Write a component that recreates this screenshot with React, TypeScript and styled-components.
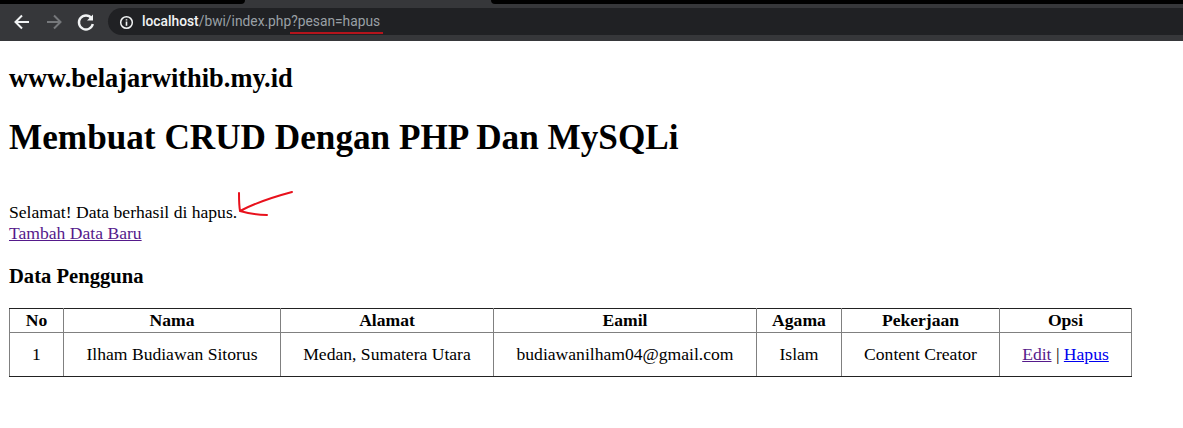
import React from "react";
import styled, { createGlobalStyle } from "styled-components";

const Global = createGlobalStyle`
  html, body { margin: 0; padding: 0; background: #fff; }
  body { font-family: "Liberation Serif", "Times New Roman", serif; font-size: 17.6px; color: #000; width: 1183px; height: 428px; overflow: hidden; }
`;

const Chrome = styled.header`
  height: 41px;
  background: #36373a;
  position: relative;
  display: flex;
  align-items: flex-start;
  padding: 8px 0 0 12px;
  box-sizing: border-box;
`;
const TabEdge = styled.div<{ $side: "left" | "right" }>`
  position: absolute;
  top: 0;
  height: 4px;
  background: #000;
  ${(p) =>
    p.$side === "left"
      ? "left: 0; width: 245px; border-bottom-right-radius: 4px;"
      : "left: 491px; right: 0; border-bottom-left-radius: 4px;"}
`;
const NavIcons = styled.div`
  display: flex;
  align-items: center;
  gap: 12px;
  width: 96px;
  height: 28px;
`;
const Omnibox = styled.div`
  flex: 1;
  height: 27px;
  padding-top: 1px;
  box-sizing: border-box;
  background: #202124;
  border-radius: 14px 0 0 14px;
  display: flex;
  align-items: center;
  padding-left: 11px;
  font: 13.8px/1 "Roboto", "Liberation Sans", sans-serif;
  color: #9aa0a6;
  gap: 8px;
  position: relative;
`;
const Host = styled.span`
  color: #f1f3f4;
  font-weight: 500;
`;
const Underline = styled.div`
  position: absolute;
  left: 182px;
  top: 24px;
  width: 93px;
  height: 2px;
  background: #b5141c;
`;
const Page = styled.main`
  padding: 0 9px;
`;
const Site = styled.h2`
  margin: 24px 0 0;
  font-size: 26.4px;
  line-height: 27px;
  font-weight: bold;
`;
const Title = styled.h1`
  margin: 25px 0 0;
  font-size: 35.2px;
  line-height: 41px;
  font-weight: bold;
`;
const Message = styled.div`
  margin-top: 44px;
  line-height: 21px;
  position: relative;
`;
const Arrow = styled.svg`
  position: absolute;
  left: 228px;
  top: -13px;
`;
const VisitedLink = styled.a`
  color: #551a8b;
  text-decoration: underline;
`;
const FreshLink = styled.a`
  color: #0000ee;
  text-decoration: underline;
`;
const Section = styled.h3`
  margin: 20px 0 0;
  font-size: 20.6px;
  line-height: 24px;
  font-weight: bold;
`;
const Table = styled.table`
  margin-top: 20px;
  border-collapse: collapse;
  table-layout: fixed;
  width: 1122px;
  border: 1px solid #222;
  font-size: 17.6px;
  text-align: center;
`;
const Th = styled.th`
  border: 1px solid #808080;
  border-top-color: #222;
  height: 23px;
  padding: 0;
  font-weight: bold;
`;
const Td = styled.td`
  border: 1px solid #808080;
  border-bottom-color: #222;
  height: 43px;
  padding: 0;
`;

const cols = [54, 217, 213, 263, 85, 158, 132];
const heads = ["No", "Nama", "Alamat", "Eamil", "Agama", "Pekerjaan", "Opsi"];
const row = ["1", "Ilham Budiawan Sitorus", "Medan, Sumatera Utara", "budiawanilham04@gmail.com", "Islam", "Content Creator"];

export default function App() {
  return (
    <>
      <Global />
      <Chrome>
        <TabEdge $side="left" />
        <TabEdge $side="right" />
        <NavIcons>
          <svg width="20" height="20" viewBox="0 0 20 20" fill="none" stroke="#f1f3f4" strokeWidth="2">
            <path d="M17 10H4M10 3.5 3.5 10l6.5 6.5" />
          </svg>
          <svg width="20" height="20" viewBox="0 0 20 20" fill="none" stroke="#76787b" strokeWidth="2">
            <path d="M3 10h13M10 3.5l6.5 6.5-6.5 6.5" />
          </svg>
          <svg width="20" height="20" viewBox="0 0 20 20" fill="none">
            <path d="M15.5 6.2A7 7 0 1 0 16.8 12" stroke="#f1f3f4" strokeWidth="2.4" />
            <path d="M17 2.5v6h-6z" fill="#f1f3f4" />
          </svg>
        </NavIcons>
        <Omnibox>
          <svg width="15" height="15" viewBox="0 0 16 16" fill="none">
            <circle cx="8" cy="8" r="6.2" stroke="#f1f3f4" strokeWidth="1.6" />
            <path d="M8 7v4.4M8 4.4v1.5" stroke="#f1f3f4" strokeWidth="1.7" />
          </svg>
          <span><Host>localhost</Host>/bwi/index.php?pesan=hapus</span>
          <Underline />
        </Omnibox>
      </Chrome>
      <Page>
        <Site>www.belajarwithib.my.id</Site>
        <Title>Membuat CRUD Dengan PHP Dan MySQLi</Title>
        <Message>
          Selamat! Data berhasil di hapus.
          <Arrow width="70" height="36" viewBox="0 0 70 36" fill="none" stroke="#e8111c" strokeWidth="2" strokeLinecap="round" strokeLinejoin="round">
            <path d="M55 3C40 7 20 13 3 22C2 16 2 10 2 4M3 22C10 24 20 26 30 26" />
          </Arrow>
          <br />
          <VisitedLink href="#">Tambah Data Baru</VisitedLink>
        </Message>
        <Section>Data Pengguna</Section>
        <Table>
          <colgroup>
            {cols.map((w, i) => <col key={i} width={w} />)}
          </colgroup>
          <thead>
            <tr>{heads.map((h) => <Th key={h}>{h}</Th>)}</tr>
          </thead>
          <tbody>
            <tr>
              {row.map((c) => <Td key={c}>{c}</Td>)}
              <Td>
                <VisitedLink href="#">Edit</VisitedLink> | <FreshLink href="#">Hapus</FreshLink>
              </Td>
            </tr>
          </tbody>
        </Table>
      </Page>
    </>
  );
}
